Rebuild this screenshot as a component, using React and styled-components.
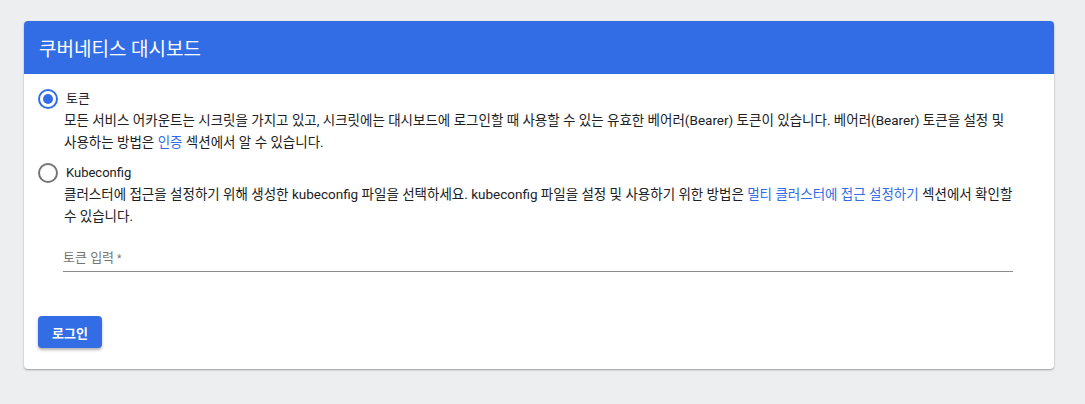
import styled, { createGlobalStyle } from "styled-components";

const GlobalStyle = createGlobalStyle`
  html, body {
    margin: 0;
    padding: 0;
    background: #edeef0;
    font-family: Roboto, "Noto Sans CJK KR", sans-serif;
  }
`;

const Page = styled.div`
  padding: 21px 31px 35px 24px;
`;

const Card = styled.div`
  background: #fff;
  border-radius: 4px;
  overflow: hidden;
  box-shadow: 0 1px 2px rgba(0, 0, 0, 0.35);
`;

const Header = styled.div`
  background: #326de6;
  color: #fff;
  height: 53px;
  display: flex;
  align-items: center;
  padding-left: 15px;
  font-size: 19px;
  font-weight: 400;
`;

const Body = styled.div`
  padding: 15px 14px 21px 14px;
`;

const Option = styled.label`
  display: flex;
  align-items: center;
  gap: 8px;
  font-size: 13px;
  line-height: 20px;
  color: #202124;
  height: 20px;
  margin-top: ${p => p.$top || 0}px;
  cursor: pointer;
`;

const Radio = styled.span`
  width: 20px;
  height: 20px;
  box-sizing: border-box;
  border-radius: 50%;
  border: 2px solid ${p => (p.$checked ? "#326de6" : "#757575")};
  display: flex;
  align-items: center;
  justify-content: center;
  &::after {
    content: "";
    width: 10px;
    height: 10px;
    border-radius: 50%;
    background: ${p => (p.$checked ? "#326de6" : "transparent")};
  }
`;

const Desc = styled.p`
  margin: 0 12px 0 26px;
  font-size: 13.5px;
  line-height: 22px;
  word-break: keep-all;
  color: #202124;
`;

const A = styled.a`
  color: #326de6;
  text-decoration: none;
`;

const Field = styled.div`
  margin: 23px 26px 0 25px;
  width: 950px;
  border-bottom: 1px solid #8c8c8c;
  padding-bottom: 4px;
  font-size: 13px;
  line-height: 16px;
  color: #757575;
`;

const Star = styled.span`
  font-size: 10px;
  margin-left: 3px;
`;

const Button = styled.button`
  display: block;
  margin-top: 44px;
  height: 32px;
  padding: 0 14px;
  border: none;
  border-radius: 4px;
  background: #326de6;
  color: #fff;
  font-family: inherit;
  font-size: 13px;
  font-weight: 700;
  box-shadow: 0 2px 3px rgba(0, 0, 0, 0.3);
`;

export default function App() {
  return (
    <>
      <GlobalStyle />
      <Page>
        <Card>
          <Header>쿠버네티스 대시보드</Header>
          <Body>
            <Option>
              <Radio $checked />
              토큰
            </Option>
            <Desc>
              모든 서비스 어카운트는 시크릿을 가지고 있고, 시크릿에는 대시보드에 로그인할 때 사용할 수 있는 유효한 베어러(Bearer) 토큰이 있습니다. 베어러(Bearer) 토큰을 설정 및 사용하는 방법은 <A href="#">인증</A> 섹션에서 알 수 있습니다.
            </Desc>
            <Option $top={10}>
              <Radio />
              Kubeconfig
            </Option>
            <Desc>
              클러스터에 접근을 설정하기 위해 생성한 kubeconfig 파일을 선택하세요. kubeconfig 파일을 설정 및 사용하기 위한 방법은 <A href="#">멀티 클러스터에 접근 설정하기</A> 섹션에서 확인할 수 있습니다.
            </Desc>
            <Field>
              토큰 입력<Star>*</Star>
            </Field>
            <Button>로그인</Button>
          </Body>
        </Card>
      </Page>
    </>
  );
}
